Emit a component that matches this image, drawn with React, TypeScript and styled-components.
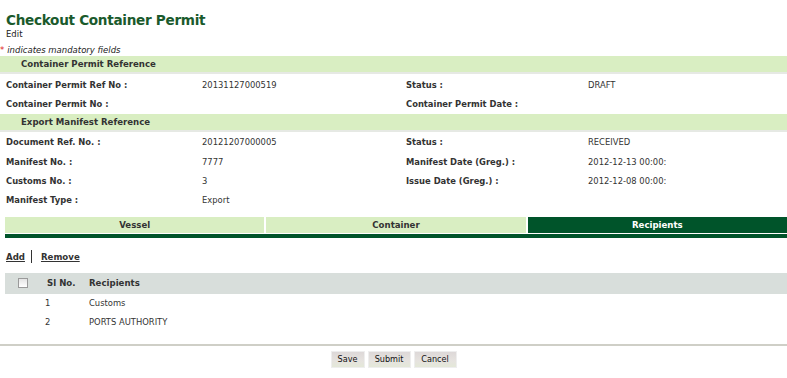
import React from "react";
import styled, { createGlobalStyle } from "styled-components";

const Global = createGlobalStyle`
  html, body { margin: 0; padding: 0; background: #ffffff; }
  body { font-family: "DejaVu Sans", Verdana, sans-serif; color: #333; }
`;

const Page = styled.div`
  width: 787px;
  display: flex;
  flex-direction: column;
`;

const Title = styled.h1`
  margin: 0;
  padding: 12px 0 0 6px;
  font-size: 13.6px;
  letter-spacing: -0.3px;
  line-height: 17px;
  font-weight: bold;
  color: #1a5a2c;
`;

const Sub = styled.div`
  padding-left: 6px;
  font-size: 8.5px;
  line-height: 10px;
  color: #222;
`;

const Note = styled.div`
  margin-top: 6px;
  font-size: 8.5px;
  line-height: 11px;
  font-style: italic;
  color: #222;
  span { color: #e02020; font-style: normal; margin-right: 3px; }
`;

const SectionBar = styled.div`
  height: 16px;
  background: #d9eec2;
  border-bottom: 2px solid #e6e9e4;
  padding-left: 21px;
  display: flex;
  align-items: center;
  font-size: 8.6px;
  font-weight: bold;
  color: #333;
`;

const FieldGrid = styled.div`
  display: grid;
  grid-template-columns: 196px 204px 182px 1fr;
  padding: 1px 0 0 6px;
  grid-auto-rows: 19.3px;
  align-items: center;
  font-size: 8.4px;
`;

const Label = styled.div`
  font-weight: bold;
  color: #333;
  white-space: nowrap;
`;

const Value = styled.div`
  color: #333;
  white-space: nowrap;
`;

const Tabs = styled.div`
  margin: 7px 0 0 5px;
  display: flex;
  gap: 2px;
  border-bottom: 4px solid #00542a;
  padding-bottom: 1px;
`;

const Tab = styled.div<{ $active?: boolean }>`
  flex: 1;
  height: 16px;
  display: flex;
  align-items: center;
  justify-content: center;
  font-size: 8.6px;
  font-weight: bold;
  background: ${(p) => (p.$active ? "#00542a" : "#d9eec2")};
  color: ${(p) => (p.$active ? "#ffffff" : "#333")};
`;

const Actions = styled.div`
  margin-top: 12px;
  padding-left: 6px;
  display: flex;
  align-items: center;
  font-size: 8.6px;
  font-weight: bold;
  height: 14px;
`;

const ActionLink = styled.a`
  color: #333;
  text-decoration: underline;
  cursor: pointer;
`;

const Sep = styled.span`
  width: 1px;
  height: 13px;
  background: #333;
  margin: 0 9px 0 6px;
`;

const Table = styled.div`
  margin: 9px 0 0 5px;
  display: flex;
  flex-direction: column;
  font-size: 8.4px;
`;

const TRow = styled.div<{ $head?: boolean }>`
  display: grid;
  grid-template-columns: 34px 50px 1fr;
  height: ${(p) => (p.$head ? "21px" : "19px")};
  align-items: center;
  background: ${(p) => (p.$head ? "#d8dedb" : "transparent")};
  font-weight: ${(p) => (p.$head ? "bold" : "normal")};
  font-size: ${(p) => (p.$head ? "8.6px" : "8.4px")};
  color: #333;
`;

const Cell = styled.div<{ $pad?: number }>`
  padding-left: ${(p) => p.$pad ?? 0}px;
  white-space: nowrap;
`;

const Check = styled.span`
  display: block;
  width: 8px;
  height: 8px;
  border: 1px solid #9a9a9a;
  background: linear-gradient(#e4e4e4, #ffffff);
  margin-left: 13px;
`;

const Body = styled.div`
  padding-top: 0px;
`;

const Footer = styled.div`
  margin-top: 12px;
  border-top: 2px solid #cfcfc7;
  padding-top: 5px;
  display: flex;
  justify-content: center;
  gap: 3px;
`;

const Button = styled.button<{ $w: number }>`
  width: ${(p) => p.$w}px;
  height: 17px;
  padding: 0;
  border: 1px solid #eeeeee;
  background: linear-gradient(#ddd8d8, #e6e3df 60%, #e4e8d8);
  font-family: "DejaVu Sans Condensed", "DejaVu Sans", sans-serif;
  font-size: 9px;
  color: #111;
`;

export default function App() {
  return (
    <Page>
      <Global />
      <Title>Checkout Container Permit</Title>
      <Sub>Edit</Sub>
      <Note>
        <span>*</span>indicates mandatory fields
      </Note>
      <SectionBar>Container Permit Reference</SectionBar>
      <FieldGrid>
        <Label>Container Permit Ref No :</Label>
        <Value>20131127000519</Value>
        <Label>Status :</Label>
        <Value>DRAFT</Value>
        <Label>Container Permit No :</Label>
        <Value></Value>
        <Label>Container Permit Date :</Label>
        <Value></Value>
      </FieldGrid>
      <SectionBar>Export Manifest Reference</SectionBar>
      <FieldGrid>
        <Label>Document Ref. No. :</Label>
        <Value>20121207000005</Value>
        <Label>Status :</Label>
        <Value>RECEIVED</Value>
        <Label>Manifest No. :</Label>
        <Value>7777</Value>
        <Label>Manifest Date (Greg.) :</Label>
        <Value>2012-12-13 00:00:</Value>
        <Label>Customs No. :</Label>
        <Value>3</Value>
        <Label>Issue Date (Greg.) :</Label>
        <Value>2012-12-08 00:00:</Value>
        <Label>Manifest Type :</Label>
        <Value>Export</Value>
        <Label></Label>
        <Value></Value>
      </FieldGrid>
      <Tabs>
        <Tab>Vessel</Tab>
        <Tab>Container</Tab>
        <Tab $active>Recipients</Tab>
      </Tabs>
      <Actions>
        <ActionLink>Add</ActionLink>
        <Sep />
        <ActionLink>Remove</ActionLink>
      </Actions>
      <Table>
        <TRow $head>
          <Cell><Check /></Cell>
          <Cell $pad={8}>Sl No.</Cell>
          <Cell>Recipients</Cell>
        </TRow>
        <Body>
          <TRow>
            <Cell></Cell>
            <Cell $pad={6}>1</Cell>
            <Cell>Customs</Cell>
          </TRow>
          <TRow>
            <Cell></Cell>
            <Cell $pad={6}>2</Cell>
            <Cell>PORTS AUTHORITY</Cell>
          </TRow>
        </Body>
      </Table>
      <Footer>
        <Button $w={34}>Save</Button>
        <Button $w={43}>Submit</Button>
        <Button $w={43}>Cancel</Button>
      </Footer>
    </Page>
  );
}
